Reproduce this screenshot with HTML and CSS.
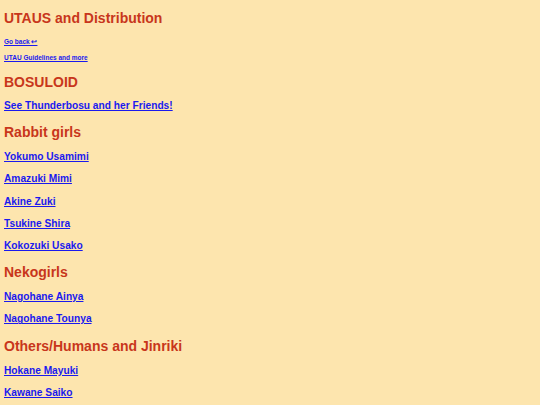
FILE: index.html
```html
<!DOCTYPE html>
<html>
<head>
<meta charset="utf-8">
<link rel="stylesheet" href="styles.css">
</head>
<body>
<main class="page">
  <h1 class="title">UTAUS and Distribution</h1>
  <p class="small"><a href="#">Go back ↩</a></p>
  <p class="small"><a href="#">UTAU Guidelines and more</a></p>

  <h2 class="heading">BOSULOID</h2>
  <p class="item"><a href="#">See Thunderbosu and her Friends!</a></p>

  <h2 class="heading">Rabbit girls</h2>
  <div class="list">
    <p class="item"><a href="#">Yokumo Usamimi</a></p>
    <p class="item"><a href="#">Amazuki Mimi</a></p>
    <p class="item"><a href="#">Akine Zuki</a></p>
    <p class="item"><a href="#">Tsukine Shira</a></p>
    <p class="item"><a href="#">Kokozuki Usako</a></p>
  </div>

  <h2 class="heading">Nekogirls</h2>
  <div class="list">
    <p class="item"><a href="#">Nagohane Ainya</a></p>
    <p class="item"><a href="#">Nagohane Tounya</a></p>
  </div>

  <h2 class="heading">Others/Humans and Jinriki</h2>
  <div class="list">
    <p class="item"><a href="#">Hokane Mayuki</a></p>
    <p class="item"><a href="#">Kawane Saiko</a></p>
  </div>
</main>
</body>
</html>
```

FILE: styles.css
```css
html, body {
  margin: 0;
  padding: 0;
  background: #fde5ae;
}

.page {
  padding: 4px 4px 0;
  font-family: "Liberation Sans", Arial, sans-serif;
  display: flex;
  flex-direction: column;
  align-items: flex-start;
}

.title,
.heading {
  margin: 0;
  color: #c8361b;
  font-weight: bold;
  font-size: 14px;
  line-height: 26px;
}

.title {
  line-height: 28px;
}

.small {
  margin: 0;
  font-size: 6.5px;
  font-weight: bold;
  line-height: 16px;
}

.title + .small {
  margin-top: 2px;
}

.heading {
  margin-top: 3px;
}

.item + .heading,
.list + .heading {
  margin-top: 2px;
}

.list {
  display: flex;
  flex-direction: column;
  margin-top: 1px;
}

.item {
  margin: 0;
  font-size: 10.2px;
  font-weight: bold;
  line-height: 22.2px;
}

a {
  color: #1a1aee;
  text-decoration: underline;
}
```
